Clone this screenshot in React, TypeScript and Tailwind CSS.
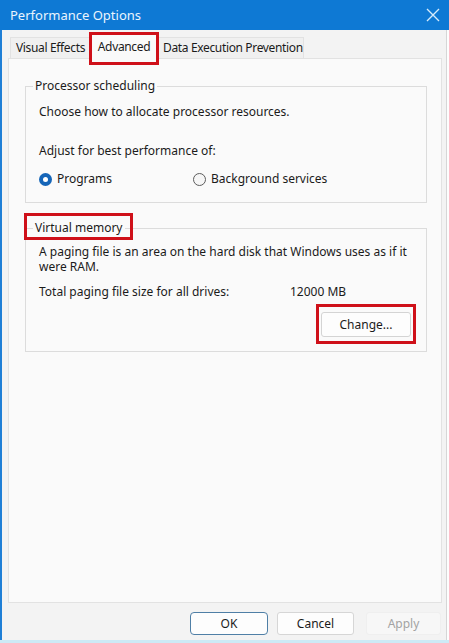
import React from "react";

function Radio({ checked, label }: { checked?: boolean; label: string }) {
  return (
    <label className="flex items-center gap-[5px]">
      {checked ? (
        <span className="w-[13px] h-[13px] rounded-full bg-[#1565b8] flex items-center justify-center">
          <span className="w-[5px] h-[5px] rounded-full bg-white" />
        </span>
      ) : (
        <span className="w-[13px] h-[13px] rounded-full border border-[#5c5c5c] bg-[#f6f6f6]" />
      )}
      <span>{label}</span>
    </label>
  );
}

export default function App() {
  return (
    <div
      className="w-[449px] h-[643px] flex flex-col text-[12px] leading-[16px] text-[#1b1b1b] bg-[#f3f3f3]"
      style={{ fontFamily: '"Noto Sans", "Open Sans", sans-serif' }}
    >
      {/* title bar */}
      <div className="h-[30px] shrink-0 bg-[#0e79d4] flex items-center justify-between pl-[10px] pr-[8px]">
        <span className="text-[#eaf4fd] text-[13px]">Performance Options</span>
        <svg width="14" height="14" viewBox="0 0 14 14" className="mr-[1px]">
          <path d="M1 1 L13 13 M13 1 L1 13" stroke="#d6ebfb" strokeWidth="1.4" />
        </svg>
      </div>

      <div className="flex-1 flex border-l-[2px] border-[#1f7fd6]">
        <div className="flex-1 flex flex-col pl-[6px] pr-[4px] border-r border-[#d6d6d6]">
          {/* tabs */}
          <div className="h-[28px] flex items-end pl-[2px] relative z-10 whitespace-nowrap tracking-[-0.35px]">
            <div className="h-[21px] w-[81px] flex items-center pl-[5px] border border-b-0 border-[#e2e2e2] bg-[#f0f0f0]">
              Visual Effects
            </div>
            <div className="relative h-[25px] w-[66px] -mb-[1px] flex items-center justify-center border border-b-0 border-[#dedede] bg-[#fafafa]">
              Advanced
              <span className="absolute -left-[3px] -right-[3px] -top-[3px] -bottom-[6px] border-[3px] border-[#cf1019]" />
            </div>
            <div className="h-[21px] w-[147px] flex items-center pl-[5px] border border-b-0 border-[#e2e2e2] bg-[#f0f0f0]">
              Data Execution Prevention
            </div>
          </div>

          {/* tab page */}
          <div className="w-[434px] h-[545px] border border-[#e2e2e2] bg-[#fafafa] pl-[16px] pt-[19px]">
            <fieldset className="w-[402px] border border-[#dcdcdc]">
              <legend className="ml-[7px] px-[2px]">Processor scheduling</legend>
              <div className="pl-[13px] pt-[10px] pb-[15px]">
                <p>Choose how to allocate processor resources.</p>
                <p className="mt-[23px]">Adjust for best performance of:</p>
                <div className="mt-[12px] flex">
                  <div className="w-[154px]">
                    <Radio checked label="Programs" />
                  </div>
                  <Radio label="Background services" />
                </div>
              </div>
            </fieldset>

            <fieldset className="mt-[17px] w-[402px] border border-[#dcdcdc]">
              <legend className="relative ml-[7px] px-[2px]">
                Virtual memory
                <span className="absolute -left-[9px] -right-[8px] -top-[7px] -bottom-[4px] border-[3px] border-[#cf1019]" />
              </legend>
              <div className="pl-[13px] pr-[12px] pt-[8px] pb-[14px]">
                <p className="leading-[15px]">
                  A paging file is an area on the hard disk that Windows uses as if it were RAM.
                </p>
                <div className="mt-[10px] flex">
                  <span className="w-[251px]">Total paging file size for all drives:</span>
                  <span>12000 MB</span>
                </div>
                <div className="mt-[12px] pr-[3px] flex justify-end">
                  <div className="relative">
                    <button className="w-[90px] h-[25px] bg-[#fdfdfd] border border-[#d4d4d4] rounded-[3px]">
                      Change...
                    </button>
                    <span className="absolute -left-[5px] -right-[5px] -top-[8px] -bottom-[7px] border-[3px] border-[#cf1019]" />
                  </div>
                </div>
              </div>
            </fieldset>
          </div>

          {/* footer buttons */}
          <div className="flex-1 flex items-start justify-end pt-[9px] pr-[1px]">
            <button className="w-[78px] h-[23px] rounded-[4px] border border-[#4f7fa6] bg-[#fdfdfd]">OK</button>
            <button className="ml-[9px] w-[77px] h-[23px] rounded-[3px] border border-[#d6d6d6] bg-[#fdfdfd]">Cancel</button>
            <button className="ml-[12px] w-[75px] h-[23px] rounded-[3px] border border-[#efefef] bg-[#f7f7f7] text-[#a3a3a3]">Apply</button>
          </div>
        </div>
        <div className="w-[2px] bg-[#fdfdfd]" />
      </div>
      <div className="h-[3px] shrink-0 bg-[#cdeaf6]" />
    </div>
  );
}
